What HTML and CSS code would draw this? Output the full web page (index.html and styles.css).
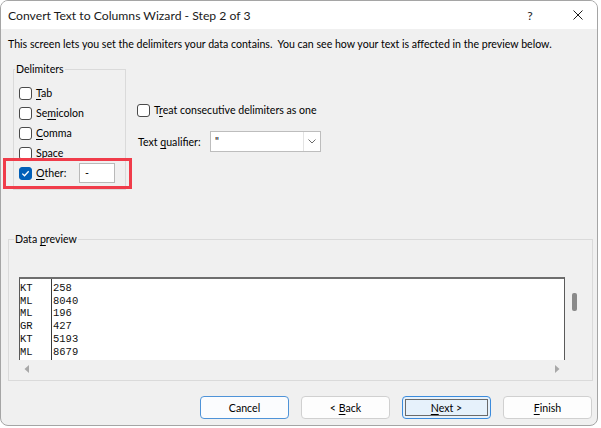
FILE: index.html
```html
<!DOCTYPE html>
<html>
<head>
<meta charset="utf-8">
<link rel="stylesheet" href="styles.css">
</head>
<body>
<div class="window">
  <div class="titlebar">
    <span class="title">Convert Text to Columns Wizard - Step 2 of 3</span>
    <span class="help">?</span>
    <span class="close"><svg width="10" height="10" viewBox="0 0 10 10"><path d="M0.5 0.5 L9.5 9.5 M9.5 0.5 L0.5 9.5" stroke="#1a1a1a" stroke-width="1" fill="none"/></svg></span>
  </div>
  <div class="content">
    <p class="intro">This screen lets you set the delimiters your data contains.&nbsp; You can see how your text is affected in the preview below.</p>
    <div class="top">
      <fieldset class="group delims">
        <legend>Delimiters</legend>
        <div class="cb"><span class="box"></span><span><u>T</u>ab</span></div>
        <div class="cb"><span class="box"></span><span>Se<u>m</u>icolon</span></div>
        <div class="cb"><span class="box"></span><span><u>C</u>omma</span></div>
        <div class="cb"><span class="box"></span><span><u>S</u>pace</span></div>
        <div class="cb other">
          <span class="box on"><svg width="11" height="11" viewBox="0 0 11 11"><path d="M2.3 5.6 L4.5 7.8 L8.7 3.3" stroke="#fff" stroke-width="1.3" fill="none"/></svg></span>
          <span class="other-label"><u>O</u>ther:</span>
          <span class="field">-</span>
        </div>
      </fieldset>
      <div class="options">
        <div class="cb"><span class="box"></span><span>T<u>r</u>eat consecutive delimiters as one</span></div>
        <div class="qual">
          <span class="qual-label">Text <u>q</u>ualifier:</span>
          <div class="select">
            <span class="select-value">"</span>
            <span class="select-arrow"><svg width="8" height="5" viewBox="0 0 8 5"><path d="M0.5 0.5 L4 4 L7.5 0.5" stroke="#6b6b6b" stroke-width="1" fill="none"/></svg></span>
          </div>
        </div>
      </div>
    </div>
    <fieldset class="group preview">
      <legend>Data <u>p</u>review</legend>
      <div class="pv">
        <div class="pv-main">
          <div class="pv-grid">
            <div class="col col1">KT<br>ML<br>ML<br>GR<br>KT<br>ML</div>
            <div class="col col2">258<br>8040<br>196<br>427<br>5193<br>8679</div>
          </div>
          <div class="hscroll">
            <svg width="5" height="8" viewBox="0 0 5 8"><polygon points="5,0 5,8 0.5,4" fill="#a8a8a8"/></svg>
            <svg width="5" height="8" viewBox="0 0 5 8"><polygon points="0,0 0,8 4.5,4" fill="#a8a8a8"/></svg>
          </div>
        </div>
        <div class="vscroll"><span class="thumb"></span></div>
      </div>
    </fieldset>
    <div class="buttons">
      <button class="btn cancel"><span>Cancel</span></button>
      <button class="btn"><span>&lt; <u>B</u>ack</span></button>
      <button class="btn next"><span class="focus"><span><u>N</u>ext &gt;</span></span></button>
      <button class="btn"><span><u>F</u>inish</span></button>
    </div>
  </div>
</div>
</body>
</html>
```
FILE: styles.css
```css
*, *::before, *::after { box-sizing: border-box; }
html, body { margin: 0; background: #ffffff; }
body {
  font-family: Lato, "Noto Sans", sans-serif;
  font-size: 10.6px;
  color: #000;
}
u { text-decoration: underline; text-underline-offset: 2px; text-decoration-thickness: 1px; }

.window {
  width: 598px;
  height: 426px;
  border: 1px solid #a5a5a5;
  border-radius: 8px;
  overflow: hidden;
  background: #f0f0f0;
  display: flex;
  flex-direction: column;
}

.titlebar {
  height: 28px;
  flex: none;
  background: #fff;
  display: flex;
  align-items: center;
  padding-left: 7px;
  font-size: 12.2px;
  color: #1a1a1a;
}
.title { flex: 1; }
.help { width: 30px; text-align: center; margin-right: 14px; }
.close { width: 38px; display: flex; justify-content: center; }
.close svg { display: block; }

.content { flex: 1; }

.intro {
  margin: 0;
  padding: 7px 0 0 7px;
  line-height: 16px;
  white-space: nowrap;
}

.top { display: flex; align-items: flex-start; }

.group {
  margin: 0;
  border: 1px solid #dadada;
  min-width: 0;
}
.group legend {
  padding: 0 1px;
  line-height: 15px;
}

.delims {
  margin: 10px 0 0 12px;
  width: 113px;
  padding: 6px 0 6px 5px;
}
.delims legend { margin-left: -4px; }

.cb {
  display: flex;
  align-items: center;
  height: 20px;
  white-space: nowrap;
}
.box {
  width: 13px;
  height: 13px;
  flex: none;
  border: 1px solid #4a4a4a;
  border-radius: 3px;
  background: #fff;
  margin-right: 4px;
  display: flex;
  align-items: center;
  justify-content: center;
}
.box.on { background: #005fb8; border-color: #005fb8; }
.box svg { display: block; }

.other { position: relative; }
.other::after {
  content: "";
  position: absolute;
  left: -16px;
  top: -5px;
  width: 129px;
  height: 31px;
  border: 3px solid #f03c4a;
}
.other-label { width: 43px; }
.field {
  width: 36px;
  height: 20px;
  border: 1px solid #b9b9b9;
  background: #fff;
  padding-left: 5px;
  line-height: 18px;
}

.options {
  margin-left: 11px;
  padding-top: 48px;
}
.qual {
  display: flex;
  align-items: center;
  margin-top: 11px;
}
.qual-label { width: 73px; padding-left: 1px; }
.select {
  width: 111px;
  height: 21px;
  border: 1px solid #bdbdbd;
  background: #fff;
  display: flex;
}
.select-value { flex: 1; padding-left: 4px; line-height: 19px; }
.select-arrow {
  width: 17px;
  border-left: 1px solid #e3e3e3;
  display: flex;
  align-items: center;
  justify-content: center;
}
.select-arrow svg { display: block; }

.preview {
  margin: 42px 0 0 7px;
  width: 585px;
  padding: 30px 10px 3px 10px;
}
.preview legend { margin-left: -5px; }

.pv { display: flex; height: 100px; }
.pv-main { flex: 1; display: flex; flex-direction: column; }
.pv-grid {
  height: 83px;
  background: #fff;
  border-top: 2px solid #6e6e6e;
  border-left: 1px solid #5a5a5a;
  border-right: 1px solid #5a5a5a;
  display: flex;
  font-family: "Liberation Mono", "Courier New", monospace;
  font-size: 10.5px;
  line-height: 12.7px;
  color: #111;
}
.col { padding-top: 3px; }
.col1 { width: 32px; border-right: 1px solid #3a3a3a; }
.col2 { flex: 1; padding-left: 1px; }
.hscroll {
  height: 17px;
  display: flex;
  align-items: center;
  justify-content: space-between;
  padding: 0 5px 0 5px;
}
.hscroll svg { display: block; }
.vscroll { width: 17px; padding: 16px 0 0 7px; }
.thumb {
  display: block;
  width: 5px;
  height: 18px;
  background: #8a8a8a;
  border-radius: 2px;
}

.buttons {
  display: flex;
  justify-content: flex-end;
  gap: 12px;
  margin-top: 15px;
  padding-right: 5px;
}
.btn {
  width: 89px;
  height: 23px;
  border: 1px solid #d0d0d0;
  border-radius: 4px;
  background: #fdfdfd;
  font-family: inherit;
  font-size: 10.6px;
  color: #000;
  padding: 0;
  display: flex;
  align-items: center;
  justify-content: center;
}
.btn.cancel { border-color: #4f93d8; background: #fbfcfe; }
.btn.next { border-color: #3c8bdc; background: #e6f1fb; padding: 2px; }
.focus {
  flex: 1;
  align-self: stretch;
  border: 1px solid #6a6a6a;
  display: flex;
  align-items: center;
  justify-content: center;
}
```
